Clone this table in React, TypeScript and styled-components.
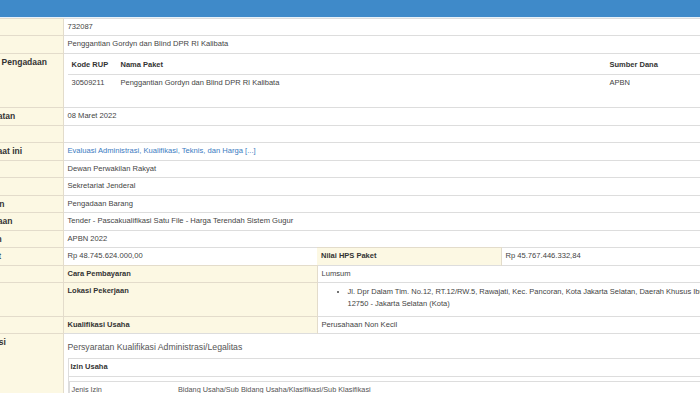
import { FC, ReactNode } from 'react';
import styled, { createGlobalStyle } from 'styled-components';

const GlobalStyle = createGlobalStyle`
    html, body {
        margin: 0;
        padding: 0;
        background: #fff;
        overflow: hidden;
    }
`;

const Page = styled.div`
    width: 700px;
    height: 393px;
    overflow: hidden;
    font-family: 'Liberation Sans', Arial, sans-serif;
    color: #444;
`;

const TopBar = styled.div`
    height: 17px;
    background: #3f8ac9;
    border-bottom: 1px solid #e9f2fa;
`;

const Sheet = styled.table`
    margin-left: -73px;
    width: 835px;
    border-collapse: collapse;
    table-layout: fixed;
    font-size: 7.6px;
`;

// rows alternate 17px / 18px like the scaled original
const Line = styled.tr`
    &:nth-child(even) > th,
    &:nth-child(even) > td {
        padding-bottom: 3.5px;
    }
`;

const Label = styled.th<{ $inner?: boolean }>`
    background: #fcf8e3;
    text-align: left;
    vertical-align: top;
    font-weight: bold;
    color: #333;
    font-size: ${(p) => (p.$inner ? '7.5px' : '8.5px')};
    line-height: 10.5px;
    padding: 3px 4px 2.5px ${(p) => (p.$inner ? '4px' : '8px')};
    border-top: 1px solid #e3dccb;
    border-right: 1px solid #e3dccb;
    white-space: nowrap;
    overflow: hidden;
`;

const Value = styled.td`
    vertical-align: top;
    line-height: 10.5px;
    padding: 3px 4px 2.5px;
    border-top: 1px solid #ddd;
    white-space: nowrap;
    overflow: hidden;
`;

const Link = styled.a`
    color: #3a7bbf;
    text-decoration: none;
`;

const SubTable = styled.table`
    width: 100%;
    border-collapse: collapse;
    table-layout: fixed;
    font-size: 7.5px;
    margin-bottom: 13px;
`;

const SubHead = styled.th`
    text-align: left;
    font-weight: bold;
    color: #333;
    line-height: 10.5px;
    padding: 3px 4px;
    border-bottom: 1px solid #ddd;
`;

const SubCell = styled.td`
    line-height: 10.5px;
    padding: 3px 4px;
`;

const Address = styled.ul`
    margin: 0;
    padding: 0 0 2px 26px;
    white-space: normal;
    font-size: 7.5px;
    line-height: 12.5px;
`;

const Heading = styled.div`
    font-size: 8.7px;
    color: #555;
    line-height: 14px;
    margin: 3px 0 4px;
`;

const Permit = styled.table`
    width: 100%;
    border-collapse: collapse;
    font-size: 7.5px;
    border: 1px solid #ddd;
`;

const PermitHead = styled.th`
    text-align: left;
    font-weight: bold;
    color: #333;
    line-height: 10.5px;
    padding: 3px 2px;
    border-bottom: 1px solid #ddd;
`;

const PermitBody = styled.td`
    padding: 0;
`;

const PermitInner = styled.table`
    width: 100%;
    margin-top: 4px;
    border-collapse: collapse;
    table-layout: fixed;
    font-size: 7.3px;
    color: #555;
    border-top: 1px solid #ddd;
    border-left: 1px solid #ddd;
`;

const PermitCol = styled.td`
    line-height: 10.5px;
    padding: 3px 2px;
    white-space: nowrap;
`;

type RowProps = {
    label: string;
    children?: ReactNode;
};

const Row: FC<RowProps> = ({ label, children }) => (
    <Line>
        <Label>{label}</Label>
        <Value colSpan={3}>{children}</Value>
    </Line>
);

const info = [
    { label: 'Tanggal Pembuatan', value: '08 Maret 2022' },
    { label: 'Keterangan', value: '' },
];

const instansi = [
    { label: 'K/L/PD', value: 'Dewan Perwakilan Rakyat' },
    { label: 'Satuan Kerja', value: 'Sekretariat Jenderal' },
    { label: 'Jenis Pengadaan', value: 'Pengadaan Barang' },
    { label: 'Metode Pengadaan', value: 'Tender - Pascakualifikasi Satu File - Harga Terendah Sistem Gugur' },
    { label: 'Tahun Anggaran', value: 'APBN 2022' },
];

export default function App() {
    return (
        <Page>
            <GlobalStyle />
            <TopBar />
            <Sheet>
                <colgroup>
                    <col style={{ width: 136 }} />
                    <col style={{ width: 254 }} />
                    <col style={{ width: 184 }} />
                    <col />
                </colgroup>
                <tbody>
                    <Row label='Kode Tender'>732087</Row>
                    <Row label='Nama Tender'>Penggantian Gordyn dan Blind DPR RI Kalibata</Row>
                    <Row label='Rencana Umum Pengadaan'>
                        <SubTable>
                            <colgroup>
                                <col style={{ width: 49 }} />
                                <col style={{ width: 489 }} />
                                <col />
                            </colgroup>
                            <thead>
                                <tr>
                                    <SubHead>Kode RUP</SubHead>
                                    <SubHead>Nama Paket</SubHead>
                                    <SubHead>Sumber Dana</SubHead>
                                </tr>
                            </thead>
                            <tbody>
                                <tr>
                                    <SubCell>30509211</SubCell>
                                    <SubCell>Penggantian Gordyn dan Blind DPR RI Kalibata</SubCell>
                                    <SubCell>APBN</SubCell>
                                </tr>
                            </tbody>
                        </SubTable>
                    </Row>
                    {info.map((item) => (
                        <Row key={item.label} label={item.label}>
                            {item.value}
                        </Row>
                    ))}
                    <Row label='Tahap Tender Saat ini'>
                        <Link href='#'>Evaluasi Administrasi, Kualifikasi, Teknis, dan Harga [...]</Link>
                    </Row>
                    {instansi.map((item) => (
                        <Row key={item.label} label={item.label}>
                            {item.value}
                        </Row>
                    ))}
                    <Line>
                        <Label>Nilai Pagu Paket</Label>
                        <Value>Rp 48.745.624.000,00</Value>
                        <Label $inner>Nilai HPS Paket</Label>
                        <Value>Rp 45.767.446.332,84</Value>
                    </Line>
                    <Line>
                        <Label />
                        <Label $inner>Cara Pembayaran</Label>
                        <Value colSpan={2}>Lumsum</Value>
                    </Line>
                    <Line>
                        <Label />
                        <Label $inner>Lokasi Pekerjaan</Label>
                        <Value colSpan={2}>
                            <Address>
                                <li>
                                    Jl. Dpr Dalam Tim. No.12, RT.12/RW.5, Rawajati, Kec. Pancoran, Kota Jakarta
                                    Selatan, Daerah Khusus Ibukota Jakarta 12750 - Jakarta Selatan (Kota)
                                </li>
                            </Address>
                        </Value>
                    </Line>
                    <Line>
                        <Label />
                        <Label $inner>Kualifikasi Usaha</Label>
                        <Value colSpan={2}>Perusahaan Non Kecil</Value>
                    </Line>
                    <Row label='Syarat Kualifikasi'>
                        <Heading>Persyaratan Kualifikasi Administrasi/Legalitas</Heading>
                        <Permit>
                            <tbody>
                                <tr>
                                    <PermitHead>Izin Usaha</PermitHead>
                                </tr>
                                <tr>
                                    <PermitBody>
                                        <PermitInner>
                                            <colgroup>
                                                <col style={{ width: 107 }} />
                                                <col />
                                            </colgroup>
                                            <tbody>
                                                <tr>
                                                    <PermitCol>Jenis Izin</PermitCol>
                                                    <PermitCol>
                                                        Bidang Usaha/Sub Bidang Usaha/Klasifikasi/Sub Klasifikasi
                                                    </PermitCol>
                                                </tr>
                                            </tbody>
                                        </PermitInner>
                                    </PermitBody>
                                </tr>
                            </tbody>
                        </Permit>
                    </Row>
                </tbody>
            </Sheet>
        </Page>
    );
}
